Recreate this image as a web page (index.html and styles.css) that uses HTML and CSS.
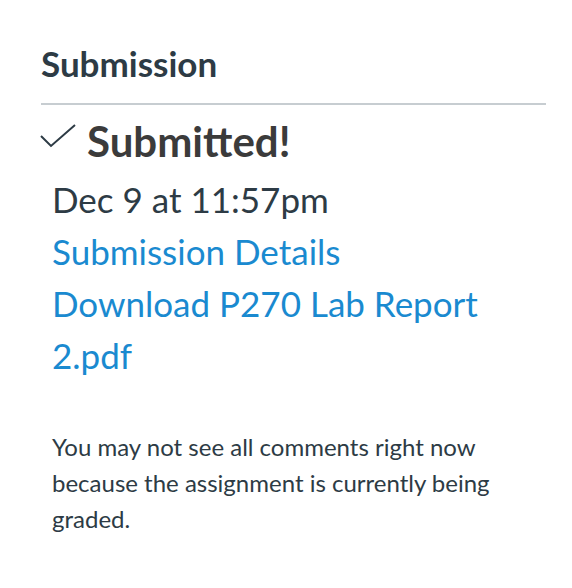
FILE: index.html
```html
<!DOCTYPE html>
<html>
<head>
<meta charset="utf-8">
<link rel="stylesheet" href="styles.css">
</head>
<body>
<div class="panel">
  <h2 class="title">Submission</h2>
  <div class="status">
    <svg class="check" width="36" height="24" viewBox="0 0 36 24"><path d="M1 12 L11 22 L35 1" fill="none" stroke="#2d3b45" stroke-width="2"/></svg>
    <span class="submitted">Submitted!</span>
  </div>
  <div class="details">
    <div class="date">Dec 9 at 11:57pm</div>
    <a class="link" href="#">Submission Details</a>
    <a class="link" href="#">Download P270 Lab Report 2.pdf</a>
    <p class="note">You may not see all comments right now because the assignment is currently being graded.</p>
  </div>
</div>
</body>
</html>
```

FILE: styles.css
```css
html, body {
  margin: 0;
  padding: 0;
  background: #ffffff;
}
body {
  font-family: "Lato", "Noto Sans", sans-serif;
  color: #2d3b45;
}
.panel {
  padding: 41px 26px 0 41px;
}
.title {
  margin: 0;
  font-size: 35px;
  font-weight: 700;
  line-height: 44px;
  padding-bottom: 18px;
  border-bottom: 2px solid #c7cdd1;
}
.status {
  display: flex;
  align-items: flex-start;
  gap: 11px;
  margin-top: 12px;
  margin-left: -1px;
}
.check {
  display: block;
  margin-top: 7px;
}
.submitted {
  font-size: 42px;
  font-weight: 700;
  color: #3b3b3b;
  line-height: 48px;
}
.details {
  padding-left: 11px;
  margin-top: 8px;
  width: 480px;
}
.date {
  font-size: 35px;
  line-height: 52px;
}
.link {
  display: block;
  font-size: 35px;
  line-height: 52px;
  color: #1a8ad0;
  text-decoration: none;
}
.note {
  margin: 48px 0 0;
  font-size: 24px;
  line-height: 36px;
}
```
